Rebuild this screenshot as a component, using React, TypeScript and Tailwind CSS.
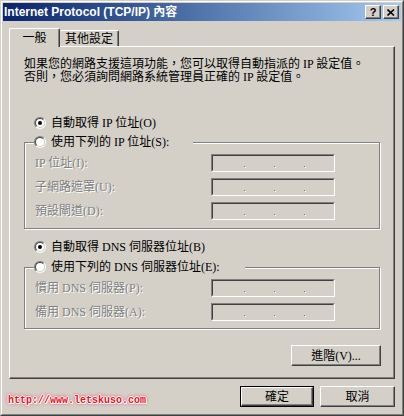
import type { ReactNode } from "react";

const body = "font-['Liberation_Serif','Noto_Sans_CJK_TC',serif] text-[12px] leading-[16px]";
const raised =
  "border border-t-white border-l-white border-r-[#404040] border-b-[#404040] shadow-[inset_-1px_-1px_0_#808080] bg-[#d4d0c8]";
const sunken = "border border-t-[#808080] border-l-[#808080] border-r-white border-b-white";
const disabled = "text-[#808080] [text-shadow:1px_1px_0_#fff]";

function Radio({ checked }: { checked?: boolean }) {
  return (
    <span className={`inline-flex h-3 w-3 shrink-0 rounded-full ${sunken}`}>
      <span className="flex h-full w-full items-center justify-center rounded-full border border-t-[#404040] border-l-[#404040] border-r-[#d4d0c8] border-b-[#d4d0c8] bg-white">
        {checked && <span className="h-1 w-1 rounded-full bg-black" />}
      </span>
    </span>
  );
}

function IpField() {
  return (
    <div className={`h-[18px] w-[124px] ${sunken}`}>
      <div className="flex h-full w-full items-end gap-[29px] border border-t-[#404040] border-l-[#404040] border-r-[#d4d0c8] border-b-[#d4d0c8] pb-[3px] pl-[31px]">
        {[0, 1, 2].map((i) => (
          <span key={i} className="h-px w-px bg-[#808080] shadow-[1px_1px_0_#fff]" />
        ))}
      </div>
    </div>
  );
}

function GroupBox({
  label,
  legendWidth,
  rows,
  pb,
}: {
  label: string;
  legendWidth: string;
  rows: string[];
  pb: string;
}) {
  return (
    <fieldset className="w-[356px] border border-[#808080] shadow-[inset_1px_1px_0_#fff,1px_1px_0_#fff]">
      <legend className={`ml-[9px] flex h-4 items-center gap-[5px] bg-[#d4d0c8] ${legendWidth}`}>
        <Radio />
        <span>{label}</span>
      </legend>
      <div className={`flex flex-col gap-[6px] pl-[10px] pt-[4px] ${pb}`}>
        {rows.map((r) => (
          <div key={r} className="flex items-center">
            <span className={`w-[176px] ${disabled}`}>{r}</span>
            <IpField />
          </div>
        ))}
      </div>
    </fieldset>
  );
}

function Button({ children, w, isDefault }: { children: ReactNode; w: string; isDefault?: boolean }) {
  const inner = (
    <div className={`flex h-full w-full items-center justify-center ${raised}`}>{children}</div>
  );
  return isDefault ? (
    <div className={`h-[21px] border border-black ${w}`}>{inner}</div>
  ) : (
    <div className={`h-[21px] ${w}`}>{inner}</div>
  );
}

export default function App() {
  return (
    <div className="h-[416px] w-[404px] border border-t-[#d4d0c8] border-l-[#d4d0c8] border-r-[#404040] border-b-[#404040] bg-[#d4d0c8]">
      <div className="flex h-full w-full flex-col border border-t-white border-l-white border-r-[#808080] border-b-[#808080] p-px">
        {/* title bar */}
        <div className="flex h-[18px] shrink-0 items-center justify-between bg-gradient-to-r from-[#0a246a] to-[#a6caf0] pl-[1px] pr-[2px]">
          <span className="font-['Liberation_Sans','Noto_Sans_CJK_TC',sans-serif] text-[12px] font-bold leading-[18px] text-white">
            Internet Protocol (TCP/IP) 內容
          </span>
          <div className="flex gap-[2px]">
            <div className={`flex h-[14px] w-[16px] items-center justify-center ${raised}`}>
              <span className="font-['Liberation_Sans',sans-serif] text-[11px] font-bold leading-none text-black">?</span>
            </div>
            <div className={`flex h-[14px] w-[16px] items-center justify-center ${raised}`}>
              <svg width="8" height="7" viewBox="0 0 8 7">
                <path d="M0.5 0.5 L7 6.5 M7 0.5 L0.5 6.5" stroke="#000" strokeWidth="1.6" />
              </svg>
            </div>
          </div>
        </div>

        <div className={`flex flex-1 flex-col px-[6px] text-black ${body}`}>
          {/* tabs */}
          <div className="mt-[7px] flex h-[18px] items-end">
            <div className="relative z-10 -mb-px flex h-[19px] w-[51px] items-center justify-center rounded-t-[2px] border-l border-r border-t border-l-white border-t-white border-r-[#404040] bg-[#d4d0c8] shadow-[inset_-1px_0_0_#808080]">
              一般
            </div>
            <div className="flex h-[16px] w-[59px] items-center justify-center rounded-t-[2px] border-r border-t border-t-white border-r-[#404040] shadow-[inset_-1px_0_0_#808080]">
              其他設定
            </div>
          </div>

          {/* panel */}
          <div className="flex h-[333px] flex-col border border-t-white border-l-white border-r-[#404040] border-b-[#404040] pl-[14px] pt-[11px] shadow-[inset_-1px_-1px_0_#808080]">
            <p className="leading-[13px]">
              如果您的網路支援這項功能，您可以取得自動指派的 IP 設定值。
              <br />
              否則，您必須詢問網路系統管理員正確的 IP 設定值。
            </p>

            <label className="ml-[10px] mt-[31px] flex h-4 items-center gap-[5px]">
              <Radio checked />
              <span>自動取得 IP 位址(O)</span>
            </label>
            <div className="mt-[3px]">
              <GroupBox
                label="使用下列的 IP 位址(S):"
                legendWidth="w-[159px]"
                rows={["IP 位址(I):", "子網路遮罩(U):", "預設閘道(D):"]}
                pb="pb-[8px]"
              />
            </div>

            <label className="ml-[10px] mt-[10px] flex h-4 items-center gap-[5px]">
              <Radio checked />
              <span>自動取得 DNS 伺服器位址(B)</span>
            </label>
            <div className="mt-[4px]">
              <GroupBox
                label="使用下列的 DNS 伺服器位址(E):"
                legendWidth="w-[211px]"
                rows={["慣用 DNS 伺服器(P):", "備用 DNS 伺服器(A):"]}
                pb="pb-[7px]"
              />
            </div>

            <div className="mt-[16px] flex w-[357px] justify-end">
              <Button w="w-[90px]">進階(V)...</Button>
            </div>
          </div>

          {/* bottom row */}
          <div className="mt-[7px] flex items-start justify-between">
            <span className="-ml-[1px] mt-[8px] font-['Liberation_Mono',monospace] text-[10px] font-bold leading-[13px] text-[#e8101c] [text-shadow:1px_0_0_#fff,-1px_0_0_#fff,0_1px_0_#fff,0_-1px_0_#fff,1px_1px_0_#fff,0_0_3px_#ff3050,0_0_4px_#ff3050]">
              http://www.letskuso.com
            </span>
            <div className="flex gap-[6px]">
              <Button w="w-[74px]" isDefault>
                確定
              </Button>
              <Button w="w-[75px]">取消</Button>
            </div>
          </div>
        </div>
      </div>
    </div>
  );
}
